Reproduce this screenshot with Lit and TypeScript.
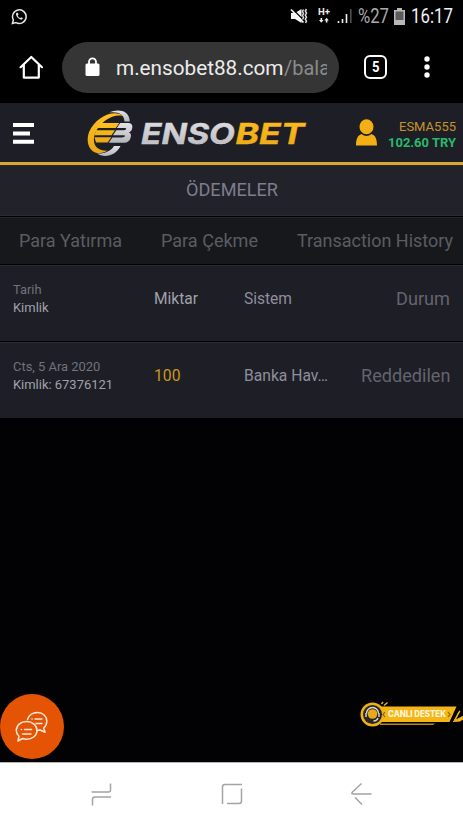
import { LitElement, html, css } from "lit";
import { customElement } from "lit/decorators.js";

/** One line of text set to a fixed measure, centred on its cap height. */
const line = (text: string, width: number, size: number, cls = "") => {
  const h = Math.round(size * 1.3);
  return html`<svg class="line ${cls}" width=${width} height=${h}>
    <text x="0" y=${h / 2 + size * 0.355} font-size=${size} textLength=${width} lengthAdjust="spacingAndGlyphs">${text}</text>
  </svg>`;
};

const base = css`
  * { box-sizing: border-box; }
  svg { display: block; flex: none; }
  .line { overflow: visible; fill: currentColor; font-family: Roboto, sans-serif; }
  .bold { font-weight: 700; }
`;

@customElement("status-bar")
class StatusBar extends LitElement {
  static styles = [base, css`
    :host { display: flex; height: 33px; padding: 0 10px 1px 11px; align-items: center; color: #f2f2f2; font-family: Roboto, sans-serif; }
    .space { flex: 1; }
    .pct { color: #aaa; margin: 0 5px 0 5px; }
    .time { margin-left: 6px; }
    .net { margin: 0 7px 0 10px; }
  `];
  render() {
    return html`
      <svg width="17" height="17" viewBox="0 0 17 17" fill="none" stroke="#e6e6e6">
        <path d="M1.4 15.5 2.4 12A6.8 6.8 0 1 1 5 14.6Z" stroke-width="1.5"/>
        <path d="M5.6 4.7c-.9.9-.8 2 .1 3.5 1 1.7 2.3 2.8 4 3.4 1 .4 1.9-.2 2.2-1.3l-1.7-1.1-1 .9C8 9.6 7.3 8.8 6.7 7.4l.8-.8-.7-1.9Z" fill="#e6e6e6" stroke="none"/>
      </svg>
      <div class="space"></div>
      <svg width="18" height="16" viewBox="0 0 18 16" fill="#f5f5f5">
        <path d="M1 5h4l6.500-4v14L5 11H1Z"/>
        <path d="m2 .5 12 12" stroke="#000" stroke-width="1.200"/>
        <path d="m1 1.500 12.500 13" stroke="#f5f5f5" stroke-width="1.700"/>
        <path d="M13.500 1.500l-1 2 1 2-1 2 1 2-1 2M16.500 1l-1.200 2 1.200 2-1.200 2.200 1.200 2-1.200 2 1.200 2-1 1.800" fill="none" stroke="#ddd" stroke-width="1.500"/>
      </svg>
      <svg class="net" width="12" height="16" viewBox="0 0 12 16">
        <text x="0" y="7" font-size="9" font-weight="700" textLength="12" lengthAdjust="spacingAndGlyphs" fill="#eee" font-family="Roboto">H+</text>
        <path d="M2.500 10h1.600v2h1.400L3.300 14.800 1 12h1.500ZM7.800 14.500h1.600v-2h1.400L8.600 9.700 6.400 12.500h1.400Z" fill="#eee"/>
      </svg>
      <svg width="16" height="16" viewBox="0 0 16 16">
        <path d="M1.500 15v-2M5.500 15v-4M9.500 15V6" stroke="#eee" stroke-width="1.600"/>
        <path d="M13.800 15V1" stroke="#505050" stroke-width="1.600"/>
      </svg>
      <span class="pct">${line("%27", 31, 19.5)}</span>
      <svg width="11" height="17" viewBox="0 0 11 17">
        <path d="M3 0h5v2h3v15H0V2h3Z" fill="#b9b9b9"/><path d="M1.500 3.500h8v8.500h-8Z" fill="#5c5c5c"/>
      </svg>
      <span class="time">${line("16:17", 42, 20)}</span>
    `;
  }
}

@customElement("browser-bar")
class BrowserBar extends LitElement {
  static styles = [base, css`
    :host { display: flex; height: 70px; align-items: center; padding: 0 31px 2px 19px; color: #fff; }
    .address { display: flex; align-items: center; width: 277px; height: 51px; margin-left: 19px; border-radius: 26px; background: #353535; padding-left: 23px; }
    .host { margin-left: 16px; color: #ececec; }
    .path { width: 43px; overflow: hidden; color: #8b8b8b; }
    .tabs { display: flex; align-items: center; justify-content: center; width: 23px; height: 24px; margin-left: 25px; border: 2.500px solid #fff; border-radius: 6px; }
    .more { margin-left: 37px; }
  `];
  render() {
    return html`
      <svg width="24" height="24" viewBox="0 0 24 24" fill="none" stroke="#fff" stroke-width="2.200" stroke-linejoin="round" stroke-linecap="round">
        <path d="M1.600 12.200 12.300 2 23 12.200M4.800 10v12.600h15V10"/>
      </svg>
      <div class="address">
        <svg width="15" height="20" viewBox="0 0 15 20">
          <rect x=".5" y="6.500" width="14" height="12.500" rx="1.500" fill="#fff"/>
          <path d="M4 7.500V4.800a3.500 3.500 0 0 1 7 0v2.700" fill="none" stroke="#fff" stroke-width="1.800"/>
        </svg>
        <span class="host">${line("m.ensobet88.com", 167.5, 20.5)}</span>
        <span class="path">${line("/bala", 46, 20.5)}</span>
      </div>
      <div class="tabs">${line("5", 7.5, 15, "bold")}</div>
      <svg class="more" width="6" height="22" viewBox="0 0 6 22" fill="#fff"><circle cx="3" cy="3" r="2.700"/><circle cx="3" cy="11" r="2.700"/><circle cx="3" cy="19" r="2.700"/></svg>
    `;
  }
}

@customElement("site-header")
class SiteHeader extends LitElement {
  static styles = [base, css`
    :host { display: flex; height: 62px; align-items: center; padding: 0 7px 0 12px; background: #1e1e26; border-bottom: 3px solid #d9a63a; box-shadow: 0 1px 0 #3a2816; position: relative; }
    .logo { margin-left: 52px; }
    .person { margin-left: 48px; }
    .account { display: flex; flex-direction: column; align-items: flex-end; flex: 1; margin-top: 2px; }
    .name { color: #c5932a; height: 16px; }
    .sum { color: #27b96a; font-weight: 700; height: 17px; }
  `];
  render() {
    return html`
      <svg width="23" height="24" viewBox="0 0 23 24" fill="#fff"><path d="M1 2h21v4H1ZM1 10.500h17v4H1ZM1 18.800h21v4H1Z"/></svg>
      <svg class="logo" width="221" height="50" viewBox="0 0 221 50">
        <defs>
          <linearGradient id="silver" x1="0" y1="0" x2="0" y2="1"><stop offset="0" stop-color="#e4e4e7"/><stop offset="1" stop-color="#b4b5ba"/></linearGradient>
          <linearGradient id="gold" x1="0" y1="0" x2="0" y2="1"><stop offset="0" stop-color="#ffc01f"/><stop offset="1" stop-color="#e9a716"/></linearGradient>
        </defs>
        <path d="M22 4.500C30 .8 42.500 1.500 42.800 13.500L37.500 13.500C37 6 31.500 3.500 22 4.500Z" fill="url(#silver)"/>
        <path d="M10 45.500C17 50.500 29 48 33.500 38L27 38C24 43 17 46 10 45.500Z" fill="url(#silver)"/>
        <path d="M36.500 8C26.500.5 8.500 9.500 2.300 23.500-2 34.500 2.500 45 12.500 45.200 16 45 18.500 44 20.500 42.800 9 43 4.500 35.500 8 25.500 13 13.500 26 5.500 36.500 8Z" fill="url(#gold)"/>
        <path d="M12.800 15h19.500l-3.500 5H9.800ZM9 22.200h19l-3.500 5H7.600ZM7.500 29.300h16.800L20.700 34.500H9Z" fill="url(#gold)"/>
        <path d="M33.300 15H41q5 0 4.300 4.700-.5 3.600-3.500 4.600 2.800 1.200 2 4.700-1.300 5.800-6.800 5.800H21.800l3.600-5.400h9.800q3-.3 3-1.300t-2-.9H25.900l3.500-4.900H37q2-.2 2.200-1.200T38 20H29.800Z" fill="url(#silver)"/>
        <g font-family="Inter, sans-serif" font-weight="700" font-style="italic" font-size="28.500" stroke-width=".4">
          <text x="54" y="36.300" textLength="94" lengthAdjust="spacingAndGlyphs" fill="url(#silver)" stroke="#d3d3d7">ENSO</text>
          <text x="148.500" y="36.300" textLength="69" lengthAdjust="spacingAndGlyphs" fill="url(#gold)" stroke="#f2b01b">BET</text>
        </g>
      </svg>
      <svg class="person" width="21" height="27" viewBox="0 0 21 27" fill="#f3af13">
        <ellipse cx="10.500" cy="7.800" rx="7" ry="7.500"/><path d="M0 26.500c0-6.500 1.500-10 5.500-11.500 3 2.500 7 2.500 10 0 4 1.500 5.500 5 5.500 11.500Z"/>
      </svg>
      <div class="account">
        <span class="name">${line("ESMA555", 57, 13.6)}</span>
        <span class="sum">${line("102.60 TRY", 68, 13.6)}</span>
      </div>
    `;
  }
}

@customElement("payment-row")
class PaymentRow extends LitElement {
  static properties = { heading: { type: Boolean } };
  declare heading: boolean;
  static styles = [base, css`
    :host { display: grid; grid-template-columns: 141.500px 90px 1fr auto; height: 77px; padding: 0 13px 10px 12.700px; align-items: center; background: #1e1e26; border-top: 1px solid #292a2d; border-bottom: 1px solid #000; color: #a1a1aa; }
    .stack { display: grid; gap: 1px; }
    .date { color: #72727c; }
    .system { color: #8f8e9d; }
    .amount { color: #c9971f; }
    .state { color: #64646f; }
  `];
  render() {
    return this.heading
      ? html`
        <div class="stack"><span class="date">${line("Tarih", 28.5, 13.2)}</span><span>${line("Kimlik", 35.5, 13.2)}</span></div>
        <span>${line("Miktar", 44, 16)}</span>
        <span class="system">${line("Sistem", 48, 16)}</span>
        <span class="state">${line("Durum", 54, 17.7)}</span>`
      : html`
        <div class="stack"><span class="date">${line("Cts, 5 Ara 2020", 87.3, 13.2)}</span><span>${line("Kimlik: 67376121", 100, 13.2)}</span></div>
        <span class="amount">${line("100", 26.5, 16)}</span>
        <span class="system">${line("Banka Hav…", 84, 16)}</span>
        <span class="state">${line("Reddedilen", 89.5, 17.7)}</span>`;
  }
}

@customElement("app-root")
class AppRoot extends LitElement {
  static styles = [base, css`
    :host { display: flex; flex-direction: column; position: relative; width: 463px; height: 824px; overflow: hidden; background: #020204; }
    status-bar, browser-bar { background: #000; flex: none; }
    .title { display: flex; align-items: center; justify-content: center; height: 51px; padding-bottom: 1px; background: #22222b; color: #7e7d8c; border-bottom: 1px solid #2b2b30; }
    .tabs { display: flex; align-items: center; height: 49px; padding: 0 10px 0 19px; background: #17181c; color: #5b5c62; border-top: 1px solid #000; border-bottom: 1px solid #000; box-shadow: inset 0 1px #25262a; justify-content: space-between; }
    .page { flex: 1; position: relative; }
    .chat { position: absolute; left: 0; bottom: 3px; width: 64px; height: 65px; border-radius: 50%; background: #e55304; display: flex; align-items: center; justify-content: center; }
    .support { position: absolute; right: 0; bottom: 30px; }
    .nav { display: flex; height: 62px; align-items: center; justify-content: space-between; padding: 1px 91px 0; border-top: 1px solid #b5b5b5; background: #fff; }
  `];
  render() {
    return html`
      <status-bar></status-bar>
      <browser-bar></browser-bar>
      <site-header></site-header>
      <div class="title">${line("ÖDEMELER", 92, 17.7)}</div>
      <div class="tabs">
        ${line("Para Yatırma", 103, 17.7)}
        ${line("Para Çekme", 97, 17.7)}
        ${line("Transaction History", 156, 17.7)}
      </div>
      <payment-row heading></payment-row>
      <payment-row></payment-row>
      <div class="page">
        <div class="chat">
          <svg width="34" height="32" viewBox="0 0 34 32" fill="none" stroke="#ffe9d8" stroke-width="1.500" stroke-linecap="round" stroke-linejoin="round">
            <path d="M12.500 8.500C14 4 18 1.500 22.500 1.500c5.500 0 9.300 3.800 9.300 8.800 0 3-1.300 5.200-3.200 6.800l1.500 4.200-5-2.300-2 .3"/>
            <path d="M11.500 10.500c6 0 10.500 4 10.500 9s-4.500 8.700-10.500 8.700c-1.500 0-2.800-.2-4-.7L3 30l1-4.800C2.100 23.500 1.300 21.600 1.300 19.500c0-5 4.200-9 10.200-9Z"/>
            <path d="M20 8h7M21 12.500h6M9.500 18.500h7M6.300 18.500h.1M7.500 23h8.500M17 8h.1"/>
          </svg>
        </div>
        <svg class="support" width="103" height="32" viewBox="0 0 103 32">
          <path d="M19 6.500H96.500L89.500 22H19Z" fill="#f4b516"/>
          <path d="M20 23.500h55l-2 1.600H20Z" fill="#b98a18"/>
          <path d="m21.500 4 1.500-2M24 5.500l3.500-3" stroke="#e9ad18" stroke-width="1.500"/>
          <path d="m99 11.500 1-.5-4.500 8.500-1 .5ZM93 21.500l9.500-5 .5 2.500-3 2Z" fill="#f4b516" stroke="#f4b516"/>
          <circle cx="12.500" cy="14.500" r="12" fill="#f0b01a"/>
          <circle cx="12.500" cy="14.500" r="9.500" fill="#272727"/>
          <circle cx="12.500" cy="14" r="4.800" fill="#e8a91a"/>
          <path d="M6.500 13.500a6 6 0 0 1 12 0M6 13v4M19 13v4M18 18q-1 3-4.500 3" fill="none" stroke="#dfd8c7" stroke-width="1.400"/>
          <path d="m25 12-2 2.500 2 2.500M88 12l2 2.500-2 2.500" fill="none" stroke="#83641b" stroke-width="1.200"/>
          <text x="28" y="17" font-size="8.300" font-weight="800" font-family="Inter, sans-serif" textLength="58" lengthAdjust="spacingAndGlyphs" fill="#fff7da">CANLI DESTEK</text>
        </svg>
      </div>
      <div class="nav">
        <svg width="21" height="24" viewBox="0 0 21 24" fill="none" stroke="#a4a4a4" stroke-width="1.500"><path d="M.5 10h17q2 0 2-2V1.500M20 15H4q-2.500 0-2.500 2.500V23.500"/></svg>
        <svg width="22" height="22" viewBox="0 0 22 22" fill="none" stroke="#a4a4a4" stroke-width="1.500"><path d="M1.500 21V4q0-2.500 2.500-2.500h17M20.500 5.500V18q0 2.500-2.500 2.500H6"/></svg>
        <svg width="21" height="24" viewBox="0 0 21 24" fill="none" stroke="#a4a4a4" stroke-width="1.500"><path d="M10.500 1.500 1.500 10q-1.500 2 .7 2H20.500M4 15.500l7 7"/></svg>
      </div>
    `;
  }
}
